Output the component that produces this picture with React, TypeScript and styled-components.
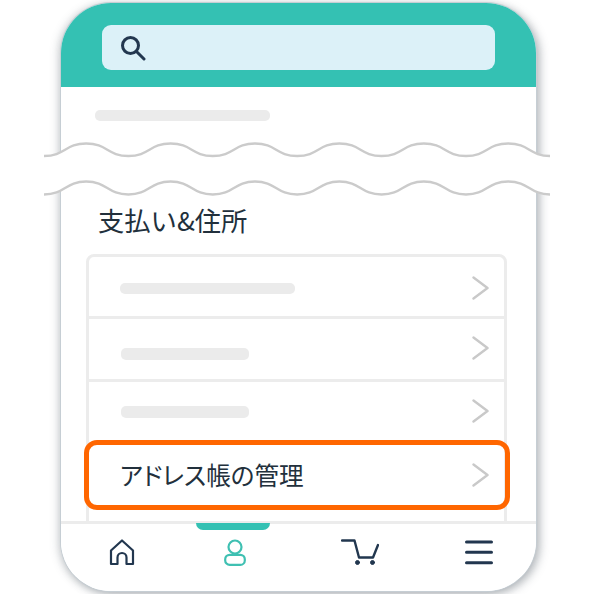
import styled, { createGlobalStyle } from "styled-components";

const WAVE_STEP = 42.2;
const WAVE_WIDTH = WAVE_STEP * 12;

const wavePoints = (top: number, bottom: number) => {
  let d = `M0 ${bottom}`;
  for (let i = 0; i < 12; i++) {
    const from = i * WAVE_STEP;
    const to = from + WAVE_STEP;
    const mid = from + WAVE_STEP / 2;
    const start = i % 2 === 0 ? bottom : top;
    const end = i % 2 === 0 ? top : bottom;
    d += ` C${mid} ${start} ${mid} ${end} ${to} ${end}`;
  }
  return d;
};

const upperWave = wavePoints(1.5, 14);
const lowerWave = wavePoints(39.5, 52.5);

const App = () => {
  return (
    <>
      <GlobalStyle />
      <Page>
        <Phone>
          <Header>
            <SearchBox>
              <svg width="26" height="26" viewBox="0 0 26 26" fill="none" stroke="#22374f" strokeWidth="3" strokeLinecap="round">
                <circle cx="10.5" cy="10.5" r="8" />
                <path d="M16.5 16.5 L24 24" />
              </svg>
            </SearchBox>
          </Header>
          <Content>
            <TopBar />
            <Heading>支払い&amp;住所</Heading>
            <List>
              <Row>
                <Placeholder $width={175} $height={11} $shift={4} />
                <Chevron shift={3} />
              </Row>
              <Row>
                <Placeholder $width={128} $height={12} $shift={10} $inset={1} />
                <Chevron shift={-2} />
              </Row>
              <Row>
                <Placeholder $width={128} $height={12} $shift={0} $inset={1} />
                <Chevron shift={-2} />
              </Row>
              <Row $active>
                <RowLabel>アドレス帳の管理</RowLabel>
                <Chevron shift={-3} />
              </Row>
            </List>
          </Content>
          <BottomNav>
            <NavItem>
              <svg width="26" height="27" viewBox="0 0 26 27" fill="none" stroke="#22374f" strokeWidth="2.2" strokeLinejoin="round">
                <path d="M2 25 V11.5 L13 1.5 L24 11.5 V25 H17.5 V18.5 a4.5 4.5 0 0 0 -9 0 V25 Z" />
              </svg>
            </NavItem>
            <NavItem>
              <Indicator />
              <svg width="22" height="27" viewBox="0 0 22 27" fill="none" stroke="#3fc0b2" strokeWidth="2.2">
                <circle cx="11" cy="8" r="6.5" />
                <rect x="1.2" y="15.8" width="19.6" height="10.1" rx="4.5" />
              </svg>
            </NavItem>
            <NavItem>
              <svg width="38" height="27" viewBox="0 0 38 27" fill="none" stroke="#22374f" strokeWidth="2.4" strokeLinecap="round" strokeLinejoin="round">
                <path d="M1 1.5 H13.5 L18 18.5 H32 L37 6" />
                <circle cx="16.5" cy="23.5" r="2" fill="#22374f" strokeWidth="1" />
                <circle cx="31.5" cy="23.5" r="2" fill="#22374f" strokeWidth="1" />
              </svg>
            </NavItem>
            <NavItem>
              <svg width="28" height="26" viewBox="0 0 28 26" fill="none" stroke="#22374f" strokeWidth="3" strokeLinecap="round">
                <path d="M1.5 3 H26.5 M1.5 13.3 H26.5 M1.5 23.7 H26.5" />
              </svg>
            </NavItem>
          </BottomNav>
          <WaveCut width={WAVE_WIDTH} height="54" viewBox={`0 0 ${WAVE_WIDTH} 54`}>
            <path d={`${upperWave} L${WAVE_WIDTH} 26 L0 26 Z`} fill="#ffffff" />
            <path d={`${lowerWave} L${WAVE_WIDTH} 26 L0 26 Z`} fill="#ffffff" />
            <path d={upperWave} fill="none" stroke="#cbcbcb" strokeWidth="2.4" />
            <path d={lowerWave} fill="none" stroke="#cbcbcb" strokeWidth="2.4" />
          </WaveCut>
        </Phone>
      </Page>
    </>
  );
};

const Chevron = ({ shift }: { shift: number }) => (
  <ChevronIcon $shift={shift} width="18" height="24" viewBox="0 0 18 24" fill="none" stroke="#c9c9c9" strokeWidth="2.4" strokeLinecap="round" strokeLinejoin="round">
    <path d="M2.5 1.5 L16.5 12 L2.5 22.5" />
  </ChevronIcon>
);

export default App;

const GlobalStyle = createGlobalStyle`
  html, body {
    margin: 0;
    padding: 0;
    background: #ffffff;
    font-family: "Noto Sans CJK JP", "Noto Sans", sans-serif;
  }
`;

const Page = styled.div`
  width: 594px;
  height: 594px;
  padding-top: 3px;
  box-sizing: border-box;
  overflow: hidden;
  background: #ffffff;
`;

const Phone = styled.div`
  position: relative;
  width: 475px;
  height: 588px;
  margin-left: 61px;
  display: flex;
  flex-direction: column;
  background: #ffffff;
  border-radius: 50px;
  box-shadow: 0 0 0 1px #c6ced4, 4px 3px 10px rgba(80, 90, 100, 0.4), -3px 1px 8px rgba(80, 90, 100, 0.25);
`;

const Header = styled.div`
  height: 84px;
  flex-shrink: 0;
  padding: 22px 41px 0;
  box-sizing: border-box;
  background: #34c1b3;
  border-radius: 50px 50px 0 0;
`;

const SearchBox = styled.div`
  width: 393px;
  height: 45px;
  display: flex;
  align-items: center;
  padding-left: 18px;
  box-sizing: border-box;
  background: #dcf1f8;
  border-radius: 9px;
`;

const Content = styled.div`
  flex: 1;
  min-height: 0;
  overflow: hidden;
  padding-top: 23px;
`;

const TopBar = styled.div`
  width: 175px;
  height: 11px;
  margin-left: 34px;
  background: #ebebeb;
  border-radius: 5px;
`;

const Heading = styled.h2`
  margin: 85px 0 20px 37px;
  height: 28px;
  font-size: 26.3px;
  font-weight: 400;
  line-height: 28px;
  color: #22303c;
`;

const List = styled.div`
  width: 421px;
  height: 300px;
  margin-left: 25px;
  box-sizing: border-box;
  border: 3px solid #ececec;
  border-radius: 8px;
`;

const Row = styled.div<{ $active?: boolean }>`
  position: relative;
  height: 63px;
  display: flex;
  align-items: center;
  justify-content: space-between;
  padding: 0 15px 0 31px;
  box-sizing: border-box;
  border-bottom: 3px solid #ececec;

  &:first-child {
    height: 62px;
  }

  &:last-child {
    border-bottom: none;
  }

  ${({ $active }) =>
    $active &&
    `
    &::after {
      content: "";
      position: absolute;
      inset: -5px -6px -2px -5px;
      border: 5px solid #ff6600;
      border-radius: 13px;
    }
  `}
`;

const Placeholder = styled.div<{ $width: number; $height: number; $shift: number; $inset?: number }>`
  width: ${({ $width }) => $width}px;
  height: ${({ $height }) => $height}px;
  margin-top: ${({ $shift }) => $shift}px;
  margin-left: ${({ $inset }) => $inset ?? 0}px;
  background: #ebebeb;
  border-radius: 5px;
`;

const RowLabel = styled.span`
  margin-bottom: 6px;
  font-size: 24.6px;
  font-weight: 400;
  line-height: 30px;
  font-feature-settings: "palt";
  color: #22303c;
`;

const ChevronIcon = styled.svg<{ $shift: number }>`
  flex-shrink: 0;
  margin-top: ${({ $shift }) => ($shift > 0 ? $shift : 0)}px;
  margin-bottom: ${({ $shift }) => ($shift < 0 ? -$shift : 0)}px;
`;

const BottomNav = styled.nav`
  position: relative;
  height: 70px;
  flex-shrink: 0;
  display: grid;
  grid-template-columns: 122px 103px 148px 89px;
  align-items: center;
  justify-items: center;
  padding-bottom: 11px;
  box-sizing: border-box;
  background: #ffffff;
  border-top: 3px solid #ececec;
  border-radius: 0 0 50px 50px;
`;

const NavItem = styled.div`
  position: relative;
  display: flex;
  align-items: center;
  justify-content: center;
  height: 27px;
`;

const Indicator = styled.div`
  position: absolute;
  top: -16px;
  left: 50%;
  width: 74px;
  height: 7px;
  margin-left: -39px;
  background: #34c1b3;
  border-radius: 0 0 8px 8px;
`;

const WaveCut = styled.svg`
  position: absolute;
  top: 139px;
  left: -17px;
`;
